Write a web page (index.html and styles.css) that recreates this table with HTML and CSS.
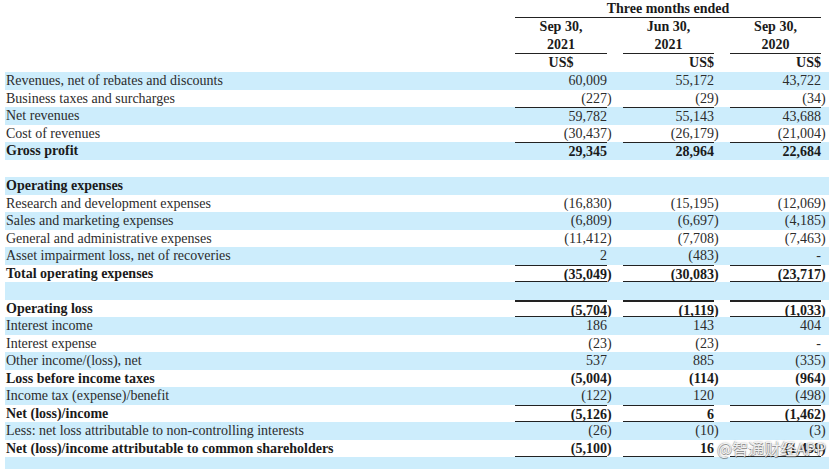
FILE: index.html
```html
<!DOCTYPE html>
<html>
<head>
<meta charset="utf-8">
<link rel="stylesheet" href="styles.css">
</head>
<body>
<div class="sheet">
  <div class="hrow">
    <div class="label"></div>
    <div class="span3 bline">Three months ended</div>
  </div>
  <div class="hrow">
    <div class="label"></div>
    <div class="cell c1 hc">Sep 30,</div>
    <div class="cell c2 hc">Jun 30,</div>
    <div class="cell c3 hc">Sep 30,</div>
  </div>
  <div class="hrow">
    <div class="label"></div>
    <div class="cell c1 hc bb">2021</div>
    <div class="cell c2 hc bb">2021</div>
    <div class="cell c3 hc bb">2020</div>
  </div>
  <div class="hrow">
    <div class="label"></div>
    <div class="cell c1 hc">US$</div>
    <div class="cell c2 hb">US$</div>
    <div class="cell c3 hb">US$</div>
  </div>

  <div class="row alt">
    <div class="label">Revenues, net of rebates and discounts</div>
    <div class="cell c1">60,009</div><div class="cell c2">55,172</div><div class="cell c3">43,722</div>
  </div>
  <div class="row">
    <div class="label">Business taxes and surcharges</div>
    <div class="cell c1">(227<span class="p">)</span></div><div class="cell c2">(29<span class="p">)</span></div><div class="cell c3">(34<span class="p">)</span></div>
  </div>
  <div class="row alt">
    <div class="label">Net revenues</div>
    <div class="cell c1 bt">59,782</div><div class="cell c2 bt">55,143</div><div class="cell c3 bt">43,688</div>
  </div>
  <div class="row">
    <div class="label">Cost of revenues</div>
    <div class="cell c1">(30,437<span class="p">)</span></div><div class="cell c2">(26,179<span class="p">)</span></div><div class="cell c3">(21,004<span class="p">)</span></div>
  </div>
  <div class="row alt bold">
    <div class="label">Gross profit</div>
    <div class="cell c1 bt">29,345</div><div class="cell c2 bt">28,964</div><div class="cell c3 bt">22,684</div>
  </div>
  <div class="row">
    <div class="label"></div>
  </div>
  <div class="row alt bold">
    <div class="label">Operating expenses</div>
  </div>
  <div class="row">
    <div class="label">Research and development expenses</div>
    <div class="cell c1">(16,830<span class="p">)</span></div><div class="cell c2">(15,195<span class="p">)</span></div><div class="cell c3">(12,069<span class="p">)</span></div>
  </div>
  <div class="row alt">
    <div class="label">Sales and marketing expenses</div>
    <div class="cell c1">(6,809<span class="p">)</span></div><div class="cell c2">(6,697<span class="p">)</span></div><div class="cell c3">(4,185<span class="p">)</span></div>
  </div>
  <div class="row">
    <div class="label">General and administrative expenses</div>
    <div class="cell c1">(11,412<span class="p">)</span></div><div class="cell c2">(7,708<span class="p">)</span></div><div class="cell c3">(7,463<span class="p">)</span></div>
  </div>
  <div class="row alt">
    <div class="label">Asset impairment loss, net of recoveries</div>
    <div class="cell c1">2</div><div class="cell c2">(483<span class="p">)</span></div><div class="cell c3">-</div>
  </div>
  <div class="row bold">
    <div class="label">Total operating expenses</div>
    <div class="cell c1 bt bb">(35,049<span class="p">)</span></div><div class="cell c2 bt bb">(30,083<span class="p">)</span></div><div class="cell c3 bt bb">(23,717<span class="p">)</span></div>
  </div>
  <div class="row alt">
    <div class="label"></div>
  </div>
  <div class="row bold">
    <div class="label">Operating loss</div>
    <div class="cell c1 bt2 bb">(5,704<span class="p">)</span></div><div class="cell c2 bt2 bb">(1,119<span class="p">)</span></div><div class="cell c3 bt2 bb">(1,033<span class="p">)</span></div>
  </div>
  <div class="row alt">
    <div class="label">Interest income</div>
    <div class="cell c1">186</div><div class="cell c2">143</div><div class="cell c3">404</div>
  </div>
  <div class="row">
    <div class="label">Interest expense</div>
    <div class="cell c1">(23<span class="p">)</span></div><div class="cell c2">(23<span class="p">)</span></div><div class="cell c3">-</div>
  </div>
  <div class="row alt">
    <div class="label">Other income/(loss), net</div>
    <div class="cell c1">537</div><div class="cell c2">885</div><div class="cell c3">(335<span class="p">)</span></div>
  </div>
  <div class="row bold">
    <div class="label">Loss before income taxes</div>
    <div class="cell c1">(5,004<span class="p">)</span></div><div class="cell c2">(114<span class="p">)</span></div><div class="cell c3">(964<span class="p">)</span></div>
  </div>
  <div class="row alt">
    <div class="label">Income tax (expense)/benefit</div>
    <div class="cell c1">(122<span class="p">)</span></div><div class="cell c2">120</div><div class="cell c3">(498<span class="p">)</span></div>
  </div>
  <div class="row bold">
    <div class="label">Net (loss)/income</div>
    <div class="cell c1 bt bb">(5,126<span class="p">)</span></div><div class="cell c2 bt bb">6</div><div class="cell c3 bt bb">(1,462<span class="p">)</span></div>
  </div>
  <div class="row alt">
    <div class="label">Less: net loss attributable to non-controlling interests</div>
    <div class="cell c1">(26<span class="p">)</span></div><div class="cell c2">(10<span class="p">)</span></div><div class="cell c3">(3<span class="p">)</span></div>
  </div>
  <div class="row bold last">
    <div class="label">Net (loss)/income attributable to common shareholders</div>
    <div class="cell c1 bb">(5,100<span class="p">)</span></div><div class="cell c2 bb">16</div><div class="cell c3 bb">(1,459<span class="p">)</span></div>
    <div class="watermark">@智通财经APP</div>
  </div>
  <div class="row alt">
    <div class="label"></div>
  </div>
</div>
</body>
</html>
```

FILE: styles.css
```css
html, body {
  margin: 0;
  padding: 0;
  background: #ffffff;
}

.sheet {
  width: 824px;
  margin-left: 5px;
  font-family: "Liberation Serif", "Times New Roman", serif;
  font-size: 14px;
  color: #2c2c2c;
}

.hrow {
  display: flex;
  height: 18px;
  line-height: 17px;
  font-weight: bold;
  color: #1a1a1a;
}

.row {
  display: flex;
  height: 17.5px;
  line-height: 17px;
  position: relative;
}

.row.alt {
  background: #cdedfc;
}

.row.bold {
  font-weight: bold;
  color: #1a1a1a;
}

.label {
  flex: 0 0 510px;
  padding-left: 1px;
  box-sizing: border-box;
  white-space: nowrap;
}

.cell {
  box-sizing: border-box;
  text-align: right;
  white-space: nowrap;
}

.c1 { flex: 0 0 92px; }
.c2 { flex: 0 0 91px; margin-left: 16px; }
.c3 { flex: 0 0 91px; margin-left: 16px; }

.span3 {
  flex: 0 0 306px;
  text-align: center;
  box-sizing: border-box;
}

.hc { text-align: center; }
.hb { text-align: right; }

.p {
  display: inline-block;
  width: 0;
  overflow: visible;
}

.bline { border-bottom: 1px solid #222; }
.bt { border-top: 1px solid #222; }
.bt2 { border-top: 2px solid #222; }
.bb { border-bottom: 1px solid #222; }

.watermark {
  position: absolute;
  left: 712px;
  top: -2px;
  z-index: 2;
  font-family: "Noto Sans CJK SC", "Noto Sans", sans-serif;
  font-weight: normal;
  font-size: 16px;
  line-height: 20px;
  white-space: nowrap;
  color: rgba(255, 255, 255, 0.88);
  text-shadow: 0.5px 0.5px 0 rgba(80, 80, 80, 0.55), -0.5px -0.5px 0 rgba(80, 80, 80, 0.45), 0 0 2px rgba(90, 90, 90, 0.5);
}
```
